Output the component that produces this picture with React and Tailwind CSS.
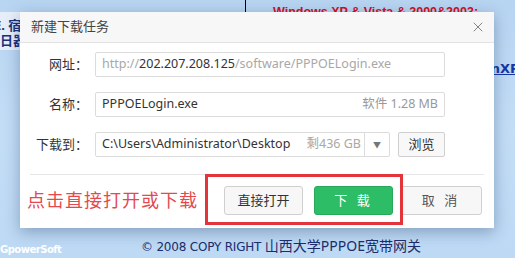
import { X } from "lucide-react";

const cjk = { fontFamily: '"Noto Sans", "Noto Sans CJK SC", sans-serif' };

function Label({ children }) {
  return (
    <div className="w-[75px] shrink-0 pr-[7px] text-right text-[13px] text-[#333]">{children}</div>
  );
}

export default function App() {
  return (
    <div
      className="relative w-[515px] h-[258px] overflow-hidden bg-gradient-to-b from-[#b7d4f1] via-[#c3ddf6] to-[#bdd9f4]"
      style={cjk}
    >
      {/* page behind the dialog */}
      <div className="absolute left-0 top-[12px] w-[22px] h-[38px] bg-[#e6eff9]" />
      <div className="absolute left-[-6px] top-[18px] text-[13px] leading-[15px] font-bold text-[#1d2f7a] whitespace-nowrap">
        E. 宿
        <br />
        <span className="pl-[6px]">日器</span>
      </div>
      <div className="absolute left-[245px] top-0 w-px h-[14px] bg-black" />
      <div
        className="absolute left-[273px] top-[4px] leading-[16px] text-[12.5px] font-bold text-[#d0101e] underline whitespace-nowrap"
        style={{ fontFamily: '"Liberation Sans", sans-serif' }}
      >
        Windows XP &amp; Vista &amp; 2000&amp;2003;
      </div>
      <div
        className="absolute left-[472px] top-[59px] text-[13px] font-bold text-[#1536a8] underline whitespace-nowrap"
        style={{ fontFamily: '"DejaVu Sans", sans-serif' }}
      >
        WinXP
      </div>
      <div
        className="absolute left-0 top-[242px] text-[10px] font-bold text-white tracking-[-0.5px]"
        style={{ fontFamily: '"DejaVu Sans", sans-serif' }}
      >
        GpowerSoft
      </div>
      <div className="absolute left-[141px] top-[235px] flex items-baseline text-[#1c2c6c] whitespace-nowrap">
        <span style={{ fontFamily: '"DejaVu Sans", sans-serif' }} className="text-[12px] tracking-[-0.2px]">
          © 2008 COPY RIGHT&nbsp;
        </span>
        <span className="text-[14px]">山西大学PPPOE宽带网关</span>
      </div>

      {/* dialog */}
      <div className="absolute left-[20px] top-[12px] w-[474px] h-[216px] bg-white shadow-[0_4px_14px_rgba(20,50,90,0.35)] flex flex-col">
        <div className="h-[31px] shrink-0 bg-[#f7f7f7] border-b border-[#e3e3e3] flex items-center justify-between pl-[11px] pr-[8px]">
          <span className="text-[13px] text-[#444]">新建下载任务</span>
          <X size={16} strokeWidth={1.2} className="text-[#666]" />
        </div>

        <div className="flex flex-col gap-[15px] pt-[9px]">
          <div className="flex items-center">
            <Label>网址：</Label>
            <div className="w-[350px] h-[25px] border border-[#dcdcdc] rounded-[2px] flex items-center px-[6px] text-[12.5px] whitespace-nowrap overflow-hidden">
              <span className="text-[#a8a8a8]">http://</span>
              <span className="text-[#333]">202.207.208.125</span>
              <span className="text-[#a8a8a8]">/software/PPPOELogin.exe</span>
            </div>
          </div>
          <div className="flex items-center">
            <Label>名称：</Label>
            <div className="w-[350px] h-[25px] border border-[#dcdcdc] rounded-[2px] flex items-center justify-between px-[6px] text-[12.5px]">
              <span className="text-[#333]">PPPOELogin.exe</span>
              <span className="text-[#999]">软件 1.28 MB</span>
            </div>
          </div>
          <div className="flex items-center">
            <Label>下载到：</Label>
            <div className="w-[295px] h-[25px] border border-[#dcdcdc] rounded-[2px] flex items-center text-[12.5px]">
              <span className="flex-1 pl-[6px] text-[#333] whitespace-nowrap">
                C:\Users\Administrator\Desktop
              </span>
              <span className="pr-[3px] text-[#a8a8a8] whitespace-nowrap">剩436 GB</span>
              <span className="w-[25px] h-full border-l border-[#dcdcdc] flex items-center justify-center text-[8px] text-[#777]">
                ▼
              </span>
            </div>
            <button className="ml-[8px] w-[47px] h-[25px] border border-[#cfcfcf] rounded-[2px] bg-[#f8f8f8] text-[13px] text-[#333]">
              浏览
            </button>
          </div>
        </div>

        <div className="mx-[10px] mt-[17px] border-t border-[#e6e6e6]" />

        <div className="relative flex items-center pl-[7px] pr-[12px] pt-[11px]">
          <span className="text-[18px] text-[#e5484d] tracking-[1px]">点击直接打开或下载</span>
          <div className="absolute left-[185px] top-[-1px] w-[198px] h-[51px] border-[3px] border-[#e3343c]" />
          <button className="ml-auto w-[79px] h-[29px] border border-[#d0d0d0] rounded-[3px] bg-[#f7f7f7] text-[13px] text-[#333]">
            直接打开
          </button>
          <button className="ml-[11px] w-[79px] h-[29px] rounded-[3px] bg-[#2dbd67] border border-[#27a85a] text-[13px] text-white tracking-[3px]">
            下 载
          </button>
          <button className="ml-[7px] w-[82px] h-[29px] border border-[#d0d0d0] rounded-[3px] bg-[#f7f7f7] text-[13px] text-[#555] tracking-[3px]">
            取 消
          </button>
        </div>
      </div>
    </div>
  );
}
